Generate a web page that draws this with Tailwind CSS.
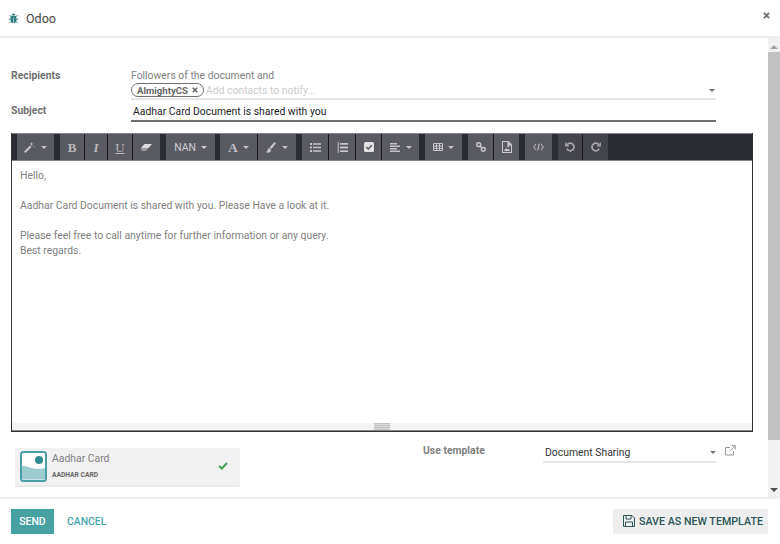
<!DOCTYPE html>
<html lang="en">
<head>
    <meta charset="UTF-8">
    <title>Odoo</title>
    <script src="https://cdn.jsdelivr.net/npm/@tailwindcss/browser@4"></script>
</head>
<body class="bg-white">
    <div class="flex flex-col w-[780px] h-[544px] overflow-hidden bg-white text-[#4c4c4c] text-[10.4px] leading-[15px] font-['Roboto',sans-serif]">
        <!-- header -->
        <div class="flex items-center h-[38px] shrink-0 border-b-2 border-[#eeeeee] pl-[8px] pr-[10px]">
            <svg class="w-[11px] h-[11px] text-[#2f7f80]" viewBox="0 0 12 12" fill="currentColor"><path d="M4 2.6a2 2 0 0 1 4 0zM3.4 3.4h5.2c.5 1 .8 2.2.8 3.6 0 2.3-1.2 4-3.1 4.3V5h-.6v6.3C3.8 11 2.6 9.300 2.600 7c0-1.400.3-2.600.8-3.600z"/><path d="M1.500 2.500l2 1.500M10.500 2.500l-2 1.500M.8 6.800h2M9.200 6.800h2M1.500 11l1.600-1.600M10.500 11L8.900 9.400" stroke="currentColor" fill="none"/></svg>
            <span class="ml-[7px] text-[12.500px] text-[#444444]">Odoo</span>
            <svg class="ml-auto mb-[6px] w-[7px] h-[7px] text-[#707070]" viewBox="0 0 8 8" stroke="currentColor" stroke-width="2.200"><path d="M1 1l6 6M7 1L1 7"/></svg>
        </div>

        <div class="flex flex-1 min-h-0">
            <!-- form -->
            <div class="flex-1 min-w-0 pl-[11px] pr-[15px] pt-[30px]">
                <div class="flex h-[32px]">
                    <div class="w-[120px] font-bold text-[#707070] leading-[15px]">Recipients</div>
                    <div class="flex-1 pr-[37px]">
                        <div class="text-[#808080] leading-[15px]">Followers of the document and</div>
                        <div class="flex items-center h-[17px] border-b-2 border-[#e6e6e6] pb-[1px]">
                            <span class="flex items-center h-[14px] px-[5px] rounded-full border border-[#707070] text-[9.600px] font-bold text-[#666666]">AlmightyCS<svg class="ml-[4px] w-[6px] h-[6px]" viewBox="0 0 8 8" stroke="currentColor" stroke-width="2.200"><path d="M1 1l6 6M7 1L1 7"/></svg></span>
                            <span class="ml-[2px] text-[#cccccc]">Add contacts to notify...</span>
                            <span class="ml-auto mr-[1px] w-0 h-0 border-x-[3px] border-t-[3px] border-x-transparent border-t-[#666666]"></span>
                        </div>
                    </div>
                </div>
                <div class="flex mt-[2px] h-[20px]">
                    <div class="w-[120px] font-bold text-[#707070] pt-[1px]">Subject</div>
                    <div class="flex-1 mr-[37px] h-[20px] border-b-2 border-[#707070] pl-[2px] pt-[2px] text-[#222222]">Aadhar Card Document is shared with you</div>
                </div>

                <!-- editor -->
                <div class="mt-[11px] border border-[#333333] border-t-0">
                    <div class="flex h-[28px] bg-[#2b2b33] border-y border-[#85858a] pl-[5px]">
                        <div class="flex h-[26px] mr-[6px]">
                            <button class="flex items-center justify-center gap-[6px] w-[37px] bg-[#5a5a63] text-[#c4c4c8]">
                                <svg class="w-[11px] h-[11px]" viewBox="0 0 11 11" fill="currentColor"><path d="M0 9.500L6 3.500 7.500 5 1.500 11zM7.500 0l.5 1.500L9.500 2 8 2.500 7.500 4 7 2.500 5.500 2 7 1.500zM10 3.500l.3.700.7.300-.7.300-.3.700-.3-.7-.7-.3.7-.3z"/></svg>
                                <span class="w-0 h-0 border-x-[3px] border-t-[3px] border-x-transparent border-t-current"></span>
                            </button>
                        </div>
                        <div class="flex h-[26px] gap-px mr-[6px] bg-[#17171b] text-[#b9b9bd]">
                            <button class="w-[24px] bg-[#5a5a63] font-['Liberation_Serif',serif] font-bold text-[13px]">B</button>
                            <button class="w-[22px] bg-[#5a5a63] font-['Liberation_Serif',serif] italic font-bold text-[13px]">I</button>
                            <button class="w-[24px] bg-[#5a5a63] font-['Liberation_Serif',serif] text-[13px]"><span class="underline">U</span></button>
                            <button class="flex items-center justify-center w-[27px] bg-[#5a5a63]">
                                <svg class="w-[11px] h-[7px]" viewBox="0 0 11 7"><path d="M3.500 0H11L7.500 4H0z" fill="#dcdcdf"/><path d="M0 4h7.500L5 7H1.500L0 6z" fill="#9a9a9f"/></svg>
                            </button>
                        </div>
                        <div class="flex h-[26px] mr-[5px]">
                            <button class="flex items-center justify-center gap-[5px] w-[49px] bg-[#5a5a63] text-[#d0d0d3]">NAN<span class="w-0 h-0 border-x-[3px] border-t-[3px] border-x-transparent border-t-current"></span></button>
                        </div>
                        <div class="flex h-[26px] gap-px mr-[6px] bg-[#17171b] text-[#c4c4c8]">
                            <button class="flex items-center justify-center gap-[5px] w-[37px] bg-[#5a5a63] font-['Liberation_Serif',serif] font-bold text-[13px]">A<span class="w-0 h-0 border-x-[3px] border-t-[3px] border-x-transparent border-t-current"></span></button>
                            <button class="flex items-center justify-center gap-[6px] w-[38px] bg-[#5a5a63]">
                                <svg class="w-[10px] h-[11px]" viewBox="0 0 10 11" fill="currentColor"><path d="M8.500 0L10 1.200 5.500 7 3.500 5.500zM3 6c-1.500.3-1 3-3 4 2.500 1.500 5.300.5 5-2.300z"/></svg>
                                <span class="w-0 h-0 border-x-[3px] border-t-[3px] border-x-transparent border-t-current"></span>
                            </button>
                        </div>
                        <div class="flex h-[26px] gap-px mr-[6px] bg-[#17171b] text-[#c4c4c8]">
                            <button class="flex items-center justify-center w-[26px] bg-[#5a5a63]">
                                <svg class="w-[11px] h-[9px]" viewBox="0 0 11 9" fill="currentColor"><path d="M0 0h2v2H0zM3 .2h8v1.600H3zM0 3.500h2v2H0zM3 3.700h8v1.600H3zM0 7h2v2H0zM3 7.200h8v1.600H3z"/></svg>
                            </button>
                            <button class="flex items-center justify-center w-[26px] bg-[#5a5a63]">
                                <svg class="w-[11px] h-[11px]" viewBox="0 0 11 11" fill="currentColor"><path d="M3 1h8v1.800H3zM3 4.600h8v1.800H3zM3 8.200h8V10H3zM.7 0h1v11h-1z"/></svg>
                            </button>
                            <button class="flex items-center justify-center w-[25px] bg-[#5a5a63]">
                                <svg class="w-[10px] h-[10px]" viewBox="0 0 10 10"><rect width="10" height="10" rx="1.500" fill="#e2e2e4"/><path d="M2.300 5l2 2 3.400-3.800" fill="none" stroke="#5a5a63" stroke-width="1.500"/></svg>
                            </button>
                            <button class="flex items-center justify-center gap-[6px] w-[37px] bg-[#5a5a63]">
                                <svg class="w-[10px] h-[9px]" viewBox="0 0 10 9" fill="currentColor"><path d="M0 0h7v1.500H0zM0 2.500h10V4H0zM0 5h7v1.500H0zM0 7.500h10V9H0z"/></svg>
                                <span class="w-0 h-0 border-x-[3px] border-t-[3px] border-x-transparent border-t-current"></span>
                            </button>
                        </div>
                        <div class="flex h-[26px] mr-[6px] text-[#c4c4c8]">
                            <button class="flex items-center justify-center gap-[5px] w-[37px] bg-[#5a5a63]">
                                <svg class="w-[10px] h-[8px]" viewBox="0 0 10 8" fill="none" stroke="currentColor"><path d="M.5.500h9v7h-9zM.5 3h9M.5 5.300h9M3.500.500v7M6.500.500v7"/></svg>
                                <span class="w-0 h-0 border-x-[3px] border-t-[3px] border-x-transparent border-t-current"></span>
                            </button>
                        </div>
                        <div class="flex h-[26px] gap-px mr-[6px] bg-[#17171b] text-[#c9c9cc]">
                            <button class="flex items-center justify-center w-[25px] bg-[#5a5a63]">
                                <svg class="w-[10px] h-[10px]" viewBox="0 0 10 10" fill="none" stroke="currentColor" stroke-width="1.500"><rect x=".8" y=".8" width="3.800" height="3.800" rx="1.700"/><rect x="5.400" y="5.400" width="3.800" height="3.800" rx="1.700"/><path d="M4 4l2 2"/></svg>
                            </button>
                            <button class="flex items-center justify-center w-[25px] bg-[#5a5a63]">
                                <svg class="w-[10px] h-[12px]" viewBox="0 0 10 12" fill="currentColor"><path fill-rule="evenodd" d="M0 0h6.500L10 3.500V12H0zM1 1v10h8V4.500H5.500V1z"/><path d="M2 10l2-3 1.500 1.500 1-1L8 10zM6.300 6.200a1 1 0 1 0-.1 0z"/></svg>
                            </button>
                        </div>
                        <div class="flex h-[26px] mr-[6px] text-[#c4c4c8]">
                            <button class="flex items-center justify-center w-[27px] bg-[#5a5a63]">
                                <svg class="w-[11px] h-[8px]" viewBox="0 0 11 8" fill="none" stroke="currentColor"><path d="M3 1L.7 4 3 7M8 1l2.300 3L8 7M6.300.5L4.700 7.500"/></svg>
                            </button>
                        </div>
                        <div class="flex h-[26px] gap-px bg-[#17171b] text-[#a8a8ac]">
                            <button class="flex items-center justify-center w-[24px] bg-[#44444c]">
                                <svg class="w-[10px] h-[10px]" viewBox="0 0 10 10" fill="none" stroke="currentColor" stroke-width="1.700"><path d="M1.800 3.300A3.800 3.800 0 1 1 1.800 6.700"/><path d="M.7 .5v3.300H4" stroke-width="1.200"/></svg>
                            </button>
                            <button class="flex items-center justify-center w-[25px] bg-[#44444c]">
                                <svg class="w-[10px] h-[10px]" viewBox="0 0 10 10" fill="none" stroke="currentColor" stroke-width="1.700"><path d="M8.200 3.300A3.800 3.800 0 1 0 8.200 6.700"/><path d="M9.300 .5v3.300H6" stroke-width="1.200"/></svg>
                            </button>
                        </div>
                    </div>
                    <div class="h-[262px] pl-[8px] pt-[7px] text-[#808080] leading-[15px]">
                        <p>Hello,</p>
                        <p class="mt-[15px]">Aadhar Card Document is shared with you. Please Have a look at it.</p>
                        <p class="mt-[15px]">Please feel free to call anytime for further information or any query.</p>
                        <p>Best regards.</p>
                    </div>
                    <div class="flex justify-center items-end h-[8px] bg-[#f5f5f5] border-b border-[#888888]">
                        <div class="w-[16px] h-[7px] bg-[repeating-linear-gradient(#c4c4c4_0_1px,#dadada_1px_2px)]"></div>
                    </div>
                </div>

                <!-- attachment + template -->
                <div class="flex mt-[16px]">
                    <div class="flex w-[225px] h-[39px] ml-[4px] bg-[#f1f1f1] border-b-2 border-[#e9e9e9] rounded-[2px] pl-[5px] pt-[3px]">
                        <svg class="w-[27px] h-[31px] shrink-0" viewBox="0 0 27 31"><rect x="1" y="1" width="25" height="29" rx="2.500" fill="#fff" stroke="#4c9ea5" stroke-width="2"/><path d="M2 15c7-1 10 5 23 2v11.500H2z" fill="#9ccbd0"/><circle cx="19" cy="9" r="4" fill="#2e8a92"/></svg>
                        <div class="ml-[5px] flex-1 min-w-0 pt-[1px]">
                            <div class="text-[10.400px] leading-[14px] text-[#808080]">Aadhar Card</div>
                            <div class="mt-[4px] text-[6.700px] leading-[10px] font-bold text-[#666666]">AADHAR CARD</div>
                        </div>
                        <svg class="w-[10px] h-[8px] mt-[11px] mr-[12px]" viewBox="0 0 10 8" fill="none" stroke="#46a35a" stroke-width="2"><path d="M1 4l2.800 2.500L9 1"/></svg>
                    </div>
                    <div class="w-[120px] ml-[183px] font-bold text-[#808080] -mt-[5px]">Use template</div>
                    <div class="flex items-center w-[173px] h-[20px] border-b-2 border-[#e6e6e6] -mt-[5px] pl-[2px] text-[#333333]">
                        Document Sharing
                        <span class="ml-auto w-0 h-0 border-x-[3px] border-t-[3px] border-x-transparent border-t-[#777777]"></span>
                    </div>
                    <svg class="ml-[9px] -mt-[3px] w-[11px] h-[11px] text-[#999999]" viewBox="0 0 11 11" fill="none" stroke="currentColor"><path d="M8.500 6.500v3.500h-8V2.500H5M6.500.7h3.800v3.800M10 1L4.800 6.200"/></svg>
                </div>
            </div>
            <!-- scrollbar -->
            <div class="flex flex-col items-center w-[12px] bg-[#f1f1f1] shrink-0 pt-[7px] pb-[5px]">
                <span class="w-0 h-0 border-x-[4px] border-b-[4px] border-x-transparent border-b-[#a3a3a3]"></span>
                <div class="w-[12px] h-[388px] mt-[3px] bg-[#c1c1c1]"></div>
                <span class="mt-auto w-0 h-0 border-x-[4px] border-t-[4px] border-x-transparent border-t-[#505050]"></span>
            </div>
        </div>

        <!-- footer -->
        <div class="flex items-center h-[47px] shrink-0 border-t-2 border-[#eeeeee] pl-[11px] pr-[12px] pb-[1px] text-[10.400px] font-medium">
            <button class="w-[43px] h-[25px] bg-[#46a1a1] text-white">SEND</button>
            <button class="ml-[13px] text-[#46a8a8]">CANCEL</button>
            <button class="ml-auto flex items-center h-[25px] w-[155px] bg-[#eeeeee] pl-[10px] text-[10.700px] text-[#2b5557]">
                <svg class="w-[12px] h-[12px] mr-[4px]" viewBox="0 0 12 12" fill="none" stroke="currentColor"><path d="M.5.500h8.500l2.500 2.500v8.500H.5zM3 .5v3.500h5V.5M2.500 11.500V7h7v4.500"/></svg>
                SAVE AS NEW TEMPLATE
            </button>
        </div>
    </div>
</body>
</html>
